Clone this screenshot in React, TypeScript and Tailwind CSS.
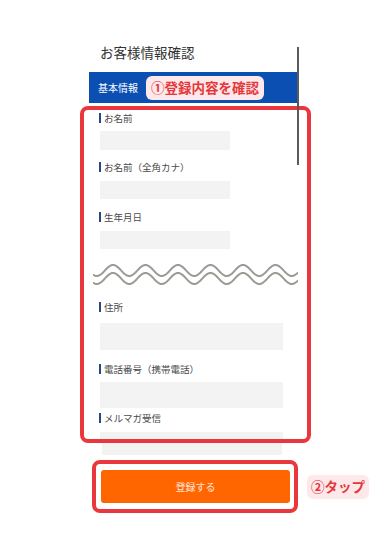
import React from 'react';

const wavePath = (cy: number) => {
  const pts: string[] = [];
  for (let x = 0; x <= 205; x += 1) {
    const y = cy + 5.5 * Math.cos((2 * Math.PI * (x - 20)) / 32.5 + Math.PI);
    pts.push(`${x === 0 ? 'M' : 'L'}${x} ${y.toFixed(2)}`);
  }
  return pts.join(' ');
};

const Label = ({ text, className = '' }: { text: string; className?: string }) => (
  <div className={`ml-[15px] flex h-[12px] shrink-0 items-center gap-[3px] ${className}`}>
    <span className="h-[10px] w-[2px] bg-[#27497f]"></span>
    <span className="text-[9.5px] leading-[12px] text-[#4a4a4a]">{text}</span>
  </div>
);

const Field = ({ className }: { className: string }) => (
  <div className={`ml-[16px] shrink-0 bg-[#f3f3f3] ${className}`}></div>
);

const App = () => {
  return (
    <div className="relative h-[550px] w-[390px] overflow-hidden bg-white font-['Noto_Sans_CJK_JP','Noto_Sans',sans-serif]">
      {/* scrollbar */}
      <div className="absolute left-[297px] top-[47px] z-10 h-[118px] w-[2px] bg-[#5a5a5a]"></div>

      <div className="ml-[100px] mt-[40px] h-[24px] text-[13.5px] leading-[24px] text-[#333]">
        お客様情報確認
      </div>

      <div className="ml-[89px] mt-[8px] flex h-[31px] w-[209px] items-center bg-[#0b4fb3]">
        <span className="ml-[9px] text-[10px] text-white">基本情報</span>
        <span className="ml-[8px] flex h-[24px] items-center rounded-[6px] bg-[#fde9e9] px-[5px] text-[13.5px] font-bold text-[#e5383d]">
          ①登録内容を確認
        </span>
      </div>

      <div className="ml-[80px] mt-[3px] flex h-[337px] w-[231px] flex-col overflow-hidden rounded-[8px] border-4 border-[#e8383d]">
        <Label text="お名前" className="mt-[2px]" />
        <Field className="mt-[7px] h-[19px] w-[130px]" />
        <Label text="お名前（全角カナ）" className="mt-[11px]" />
        <Field className="mt-[8px] h-[18px] w-[130px]" />
        <Label text="生年月日" className="mt-[12px]" />
        <Field className="mt-[8px] h-[18px] w-[130px]" />
        <svg className="ml-[9px] mt-[13px] shrink-0" width="205" height="25" viewBox="0 0 205 25">
          <path d={wavePath(8.5)} fill="none" stroke="#9b9b95" strokeWidth="2" />
          <path d={wavePath(16.5)} fill="none" stroke="#9b9b95" strokeWidth="2" />
        </svg>
        <Label text="住所" className="mt-[14px]" />
        <Field className="mt-[10px] h-[27px] w-[183px]" />
        <Label text="電話番号（携帯電話）" className="mt-[13px]" />
        <Field className="mt-[7px] h-[26px] w-[183px]" />
        <Label text="メルマガ受信" className="mt-[4px]" />
        <Field className="mt-[8px] h-[30px] w-[183px]" />
      </div>
      <div className="ml-[102px] h-[12px] w-[180px] bg-[#f3f3f3]"></div>

      <div className="ml-[92px] mt-[5px] flex items-center gap-[9px]">
        <div className="flex h-[53px] w-[206px] items-center rounded-[8px] border-4 border-[#e8383d] pl-[5px]">
          <button className="flex h-[33px] w-[189px] items-center justify-center rounded-[3px] bg-[#ff6600] text-[10px] text-white/85">
            登録する
          </button>
        </div>
        <span className="flex h-[24px] items-center rounded-[6px] bg-[#fde9e9] px-[4px] text-[13.5px] font-bold text-[#e5383d]">
          ②タップ
        </span>
      </div>
    </div>
  );
};

export default App;
